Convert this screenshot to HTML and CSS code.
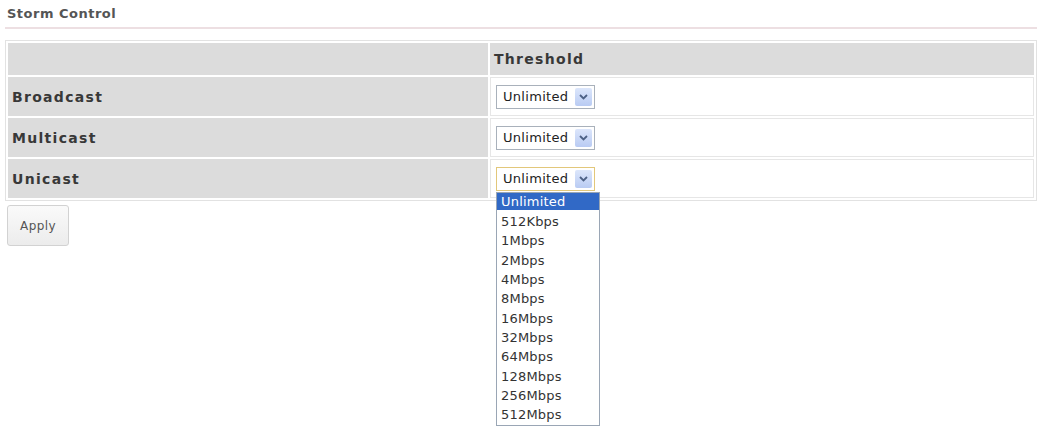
FILE: index.html
```html
<!DOCTYPE html>
<html lang="en">
<head>
  <meta charset="UTF-8" />
  <title>Storm Control</title>
  <link rel="stylesheet" href="styles.css">
</head>
<body>
  <h2 class="section-title">Storm Control</h2>

  <table class="storm-table">
    <thead>
      <tr>
        <th class="label-col"></th>
        <th>Threshold</th>
      </tr>
    </thead>
    <tbody>
      <tr>
        <th>Broadcast</th>
        <td>
          <div class="combo">
            <span class="combo-text">Unlimited</span>
            <span class="combo-btn"><svg width="9" height="6" viewBox="0 0 9 6"><path d="M1 1 L4.5 4.5 L8 1" fill="none" stroke="#4d6185" stroke-width="1.8"/></svg></span>
          </div>
        </td>
      </tr>
      <tr>
        <th>Multicast</th>
        <td>
          <div class="combo">
            <span class="combo-text">Unlimited</span>
            <span class="combo-btn"><svg width="9" height="6" viewBox="0 0 9 6"><path d="M1 1 L4.5 4.5 L8 1" fill="none" stroke="#4d6185" stroke-width="1.8"/></svg></span>
          </div>
        </td>
      </tr>
      <tr>
        <th>Unicast</th>
        <td>
          <div class="combo open">
            <span class="combo-text">Unlimited</span>
            <span class="combo-btn"><svg width="9" height="6" viewBox="0 0 9 6"><path d="M1 1 L4.5 4.5 L8 1" fill="none" stroke="#4d6185" stroke-width="1.8"/></svg></span>
            <ul class="combo-list">
              <li class="selected">Unlimited</li>
              <li>512Kbps</li>
              <li>1Mbps</li>
              <li>2Mbps</li>
              <li>4Mbps</li>
              <li>8Mbps</li>
              <li>16Mbps</li>
              <li>32Mbps</li>
              <li>64Mbps</li>
              <li>128Mbps</li>
              <li>256Mbps</li>
              <li>512Mbps</li>
            </ul>
          </div>
        </td>
      </tr>
    </tbody>
  </table>

  <button class="btn">Apply</button>
</body>
</html>
```

FILE: styles.css
```css
html, body {
  min-height: 429px;
}
body {
  margin: 0;
  padding: 6px 5px;
  box-sizing: border-box;
  background: #fff;
  font-family: "DejaVu Sans", Verdana, sans-serif;
  color: #444;
}
.section-title {
  margin: 0 0 11px 0;
  padding: 0 0 6px 2px;
  font-size: 13px;
  letter-spacing: 0.5px;
  font-weight: bold;
  line-height: 15px;
  color: #555;
  border-bottom: 2px solid #eddfe2;
}
.storm-table {
  width: 1032px;
  border: 1px solid #e2e2e2;
  border-spacing: 2px;
}
.storm-table th {
  background: #dcdcdc;
  text-align: left;
  font-size: 14px;
  letter-spacing: 1.3px;
  font-weight: bold;
  color: #383838;
  padding: 0 4px;
  height: 39px;
}
.storm-table thead th {
  height: 32px;
}
.storm-table .label-col {
  width: 472px;
}
.storm-table td {
  background: #fff;
  border: 1px solid #e6e6e6;
  padding: 0 5px;
}
.combo {
  position: relative;
  display: flex;
  align-items: center;
  width: 99px;
  height: 24px;
  box-sizing: border-box;
  border: 1px solid #a9b1bb;
  background: #fff;
}
.combo.open {
  border-color: #e2c77a;
}
.combo-text {
  flex: 1;
  padding-left: 6px;
  font-family: "DejaVu Sans", Verdana, sans-serif;
  font-size: 13px;
  letter-spacing: 0.3px;
  color: #222;
}
.combo-btn {
  display: flex;
  align-items: center;
  justify-content: center;
  width: 17px;
  height: 18px;
  margin-right: 2px;
  background: linear-gradient(#dce6fb, #b9cbf3);
  border-radius: 2px;
}
.combo-list {
  position: absolute;
  top: calc(100% + 2px);
  left: -1px;
  width: 104px;
  margin: 0;
  padding: 0;
  list-style: none;
  box-sizing: border-box;
  border: 1px solid #9aa6b5;
  background: #fff;
  z-index: 2;
}
.combo-list li {
  height: 19.35px;
  line-height: 19.35px;
  padding-left: 4px;
  font-family: "DejaVu Sans", Verdana, sans-serif;
  font-size: 13px;
  letter-spacing: 0.2px;
  color: #333;
}
.combo-list li.selected {
  height: 17px;
  line-height: 17px;
  margin-bottom: 2.35px;
  background: #3169c6;
  color: #fff;
}
.btn {
  margin: 4px 0 0 2px;
  width: 62px;
  height: 41px;
  font-family: "DejaVu Sans", Verdana, sans-serif;
  font-size: 12px;
  letter-spacing: 0.4px;
  color: #555;
  background: linear-gradient(#fafafa, #ececec);
  border: 1px solid #d2d2d2;
  border-radius: 3px;
}
```
